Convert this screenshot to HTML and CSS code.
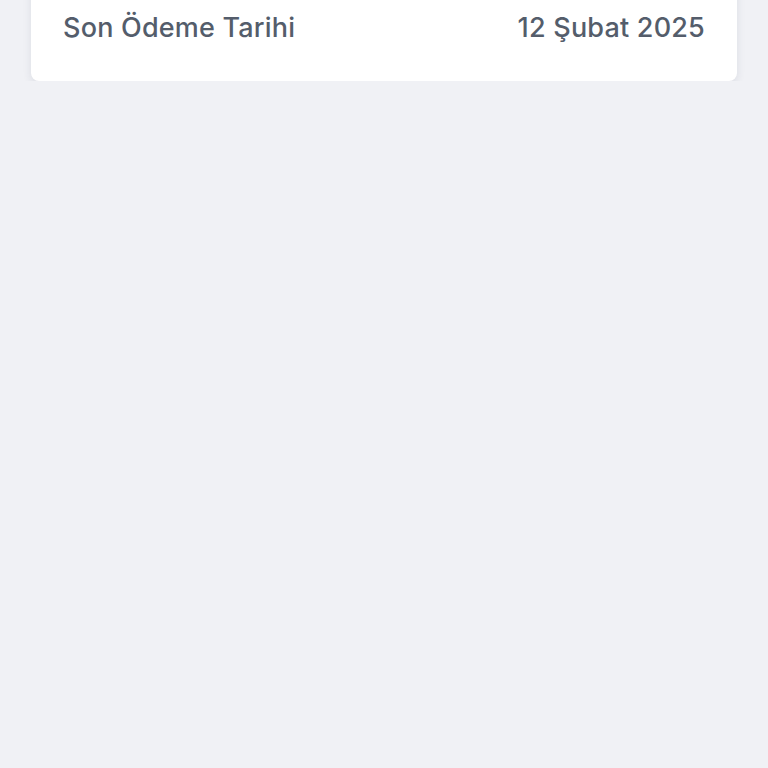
FILE: index.html
```html
<!DOCTYPE html>
<html lang="tr">
<head>
  <meta charset="UTF-8">
  <meta name="viewport" content="width=device-width, initial-scale=1.0">
  <title>Fatura Detayı</title>
  <link rel="stylesheet" href="styles.css">
</head>
<body>

<div class="container">
  <!-- Bill details card (scrolled, top is off screen) -->
  <div class="card">
    <div class="card-row">
      <span class="card-label">Son Ödeme Tarihi</span>
      <span class="card-value">12 Şubat 2025</span>
    </div>
  </div>
</div>

</body>
</html>
```

FILE: styles.css
```css
body {
  font-family: Inter, "Open Sans", Arial, sans-serif;
  margin: 0;
  padding: 0;
  background-color: #f0f1f5;
}

.container {
  padding: 0 31px;
}

.card {
  margin-top: -21px;
  padding: 20px 32px 26px;
  background-color: #ffffff;
  border-radius: 0 0 8px 8px;
  box-shadow: 0 3px 9px rgba(40, 50, 80, 0.1);
}

.card-row {
  display: flex;
  justify-content: space-between;
  align-items: center;
  height: 56px;
}

.card-label,
.card-value {
  font-size: 27px;
  font-weight: 500;
  letter-spacing: 0.2px;
  color: #545d6b;
}
```
